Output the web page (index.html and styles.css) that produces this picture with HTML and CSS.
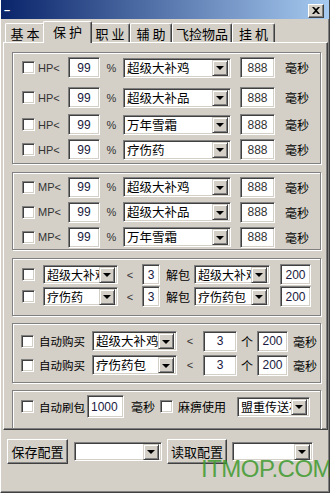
FILE: index.html
```html
<!DOCTYPE html>
<html lang="zh">
<head>
    <meta charset="UTF-8">
    <meta name="viewport" content="width=device-width, initial-scale=1.0">
    <title>保护设置</title>
    <link rel="stylesheet" href="styles.css">
</head>
<body>
    <div class="window">
        <div class="titlebar">
            <span class="title-dash">–</span>
            <span class="close-btn">
                <svg width="8" height="7" viewBox="0 0 8 7"><path d="M0 0h2l2 2 2-2h2L5 3.5 8 7H6L4 5 2 7H0l3-3.5z" fill="#000"/></svg>
            </span>
        </div>

        <div class="tabs">
            <div class="tab t-base">基本</div>
            <div class="tab active">保护</div>
            <div class="tab t-job">职业</div>
            <div class="tab t-aux">辅助</div>
            <div class="tab t-pick">飞捡物品</div>
            <div class="tab t-hang">挂 机</div>
        </div>

        <div class="panel">
            <!-- HP -->
            <div class="group g-hp">
                <div class="row">
                    <span class="check"></span>
                    <span class="lbl-stat">HP&lt;</span>
                    <span class="edit e-pct">99</span>
                    <span class="pct">%</span>
                    <div class="combo c-item"><span class="combo-text">超级大补鸡</span><span class="drop"></span></div>
                    <span class="edit e-ms">888</span>
                    <span class="unit u-ms">毫秒</span>
                </div>
                <div class="row">
                    <span class="check"></span>
                    <span class="lbl-stat">HP&lt;</span>
                    <span class="edit e-pct">99</span>
                    <span class="pct">%</span>
                    <div class="combo c-item"><span class="combo-text">超级大补品</span><span class="drop"></span></div>
                    <span class="edit e-ms">888</span>
                    <span class="unit u-ms">毫秒</span>
                </div>
                <div class="row">
                    <span class="check"></span>
                    <span class="lbl-stat">HP&lt;</span>
                    <span class="edit e-pct">99</span>
                    <span class="pct">%</span>
                    <div class="combo c-item"><span class="combo-text">万年雪霜</span><span class="drop"></span></div>
                    <span class="edit e-ms">888</span>
                    <span class="unit u-ms">毫秒</span>
                </div>
                <div class="row">
                    <span class="check"></span>
                    <span class="lbl-stat">HP&lt;</span>
                    <span class="edit e-pct">99</span>
                    <span class="pct">%</span>
                    <div class="combo c-item"><span class="combo-text">疗伤药</span><span class="drop"></span></div>
                    <span class="edit e-ms">888</span>
                    <span class="unit u-ms">毫秒</span>
                </div>
            </div>

            <!-- MP -->
            <div class="group g-mp">
                <div class="row">
                    <span class="check"></span>
                    <span class="lbl-stat">MP&lt;</span>
                    <span class="edit e-pct">99</span>
                    <span class="pct">%</span>
                    <div class="combo c-item"><span class="combo-text">超级大补鸡</span><span class="drop"></span></div>
                    <span class="edit e-ms">888</span>
                    <span class="unit u-ms">毫秒</span>
                </div>
                <div class="row">
                    <span class="check"></span>
                    <span class="lbl-stat">MP&lt;</span>
                    <span class="edit e-pct">99</span>
                    <span class="pct">%</span>
                    <div class="combo c-item"><span class="combo-text">超级大补品</span><span class="drop"></span></div>
                    <span class="edit e-ms">888</span>
                    <span class="unit u-ms">毫秒</span>
                </div>
                <div class="row">
                    <span class="check"></span>
                    <span class="lbl-stat">MP&lt;</span>
                    <span class="edit e-pct">99</span>
                    <span class="pct">%</span>
                    <div class="combo c-item"><span class="combo-text">万年雪霜</span><span class="drop"></span></div>
                    <span class="edit e-ms">888</span>
                    <span class="unit u-ms">毫秒</span>
                </div>
            </div>

            <!-- unpack -->
            <div class="group g-unpack">
                <div class="row">
                    <span class="check"></span>
                    <div class="combo c-pack"><span class="combo-text">超级大补鸡</span><span class="drop"></span></div>
                    <span class="lt">&lt;</span>
                    <span class="edit e-num">3</span>
                    <span class="unit u-unpack">解包</span>
                    <div class="combo c-bag"><span class="combo-text">超级大补鸡包</span><span class="drop"></span></div>
                    <span class="edit e-200">200</span>
                </div>
                <div class="row">
                    <span class="check"></span>
                    <div class="combo c-pack"><span class="combo-text">疗伤药</span><span class="drop"></span></div>
                    <span class="lt">&lt;</span>
                    <span class="edit e-num">3</span>
                    <span class="unit u-unpack">解包</span>
                    <div class="combo c-bag"><span class="combo-text">疗伤药包</span><span class="drop"></span></div>
                    <span class="edit e-200">200</span>
                </div>
            </div>

            <!-- auto buy -->
            <div class="group g-buy">
                <div class="row">
                    <span class="check"></span>
                    <span class="unit u-auto">自动购买</span>
                    <div class="combo c-buy"><span class="combo-text">超级大补鸡包</span><span class="drop"></span></div>
                    <span class="lt lt-buy">&lt;</span>
                    <span class="edit e-cnt">3</span>
                    <span class="ge">个</span>
                    <span class="edit e-buyms">200</span>
                    <span class="unit u-buyms">毫秒</span>
                </div>
                <div class="row">
                    <span class="check"></span>
                    <span class="unit u-auto">自动购买</span>
                    <div class="combo c-buy"><span class="combo-text">疗伤药包</span><span class="drop"></span></div>
                    <span class="lt lt-buy">&lt;</span>
                    <span class="edit e-cnt">3</span>
                    <span class="ge">个</span>
                    <span class="edit e-buyms">200</span>
                    <span class="unit u-buyms">毫秒</span>
                </div>
            </div>

            <!-- auto refresh -->
            <div class="group g-refresh">
                <div class="row">
                    <span class="check"></span>
                    <span class="unit u-auto u-refresh">自动刷包</span>
                    <span class="edit e-1000">1000</span>
                    <span class="unit u-refms">毫秒</span>
                    <span class="check c-numb"></span>
                    <span class="unit u-numb">麻痹使用</span>
                    <div class="combo c-scroll"><span class="combo-text">盟重传送石</span><span class="drop"></span></div>
                </div>
            </div>
        </div>

        <div class="footer">
            <span class="btn b-save">保存配置</span>
            <div class="combo c-cfg"><span class="combo-text"></span><span class="drop"></span></div>
            <span class="btn b-load">读取配置</span>
            <div class="combo c-cfg2"><span class="combo-text"></span><span class="drop"></span></div>
        </div>

        <div class="watermark">ITMOP.COM</div>
    </div>
</body>
</html>
```

FILE: styles.css
```css
body {
    margin: 0;
    background-color: #d4d0c8;
    font-family: "Noto Sans CJK SC", sans-serif;
    font-size: 12px;
    color: #000;
}
.window {
    position: relative;
    width: 330px;
    height: 493px;
    box-sizing: border-box;
    border-left: 1px solid #fff;
    border-right: 1px solid #404040;
    border-bottom: 1px solid #404040;
    box-shadow: inset -1px -1px 0 #808080;
    overflow: hidden;
}
.titlebar {
    height: 19px;
    display: flex;
    align-items: center;
    justify-content: space-between;
    padding: 0 5px 0 3px;
    background: linear-gradient(to right, #0a246a, #a6caf0);
}
.title-dash {
    color: #fff;
    font-family: "Liberation Sans", sans-serif;
    font-size: 11px;
    font-weight: bold;
}
.close-btn {
    width: 14px;
    height: 12px;
    margin-top: 2px;
    display: flex;
    align-items: center;
    justify-content: center;
    background: #d4d0c8;
    border: 1px solid;
    border-color: #fff #404040 #404040 #fff;
    box-shadow: inset -1px -1px 0 #808080;
}

/* tabs */
.tabs {
    display: flex;
    align-items: flex-end;
    height: 23px;
    padding-left: 4px;
}
.tab {
    height: 19px;
    box-sizing: border-box;
    display: flex;
    align-items: center;
    justify-content: center;
    font-size: 13px;
    letter-spacing: 3px;
    padding-left: 3px;
    border: 1px solid;
    border-bottom: none;
    border-color: #fff #404040 #404040 #fff;
    box-shadow: inset -1px 0 0 #808080;
    border-radius: 2px 2px 0 0;
}
.t-base { width: 40px; }
.t-job { width: 40px; }
.t-aux { width: 42px; }
.t-pick { width: 60px; letter-spacing: 0; padding-left: 0; }
.t-hang { width: 43px; letter-spacing: 0; padding-left: 0; }
.tab.active {
    width: 49px;
    height: 22px;
    margin: 0 -2px -1px;
    position: relative;
    z-index: 1;
    background: #d4d0c8;
    padding-bottom: 2px;
}

/* panel */
.panel {
    margin: 0 1px 0 2px;
    height: 388px;
    box-sizing: border-box;
    border: 1px solid;
    border-color: #fff #404040 #404040 #fff;
    box-shadow: inset -1px -1px 0 #808080;
    padding: 9px 6px 0 8px;
    display: flex;
    flex-direction: column;
    gap: 8px;
    overflow: hidden;
}
.group {
    border: 1px solid #808080;
    box-shadow: inset 1px 1px 0 #fff, 1px 1px 0 #fff;
    padding-left: 9px;
    display: flex;
    flex-direction: column;
}
.g-hp { height: 115px; box-sizing: border-box; padding-top: 4px; }
.g-hp .row:nth-child(2) { margin-top: 9px; }
.g-hp .row:nth-child(3) { margin-top: 6px; }
.g-hp .row:nth-child(4) { margin-top: 4px; }
.g-mp { height: 81px; box-sizing: border-box; padding-top: 4px; gap: 4px; }
.g-unpack { height: 59px; box-sizing: border-box; padding-top: 5px; gap: 1px; }
.g-buy { height: 62px; box-sizing: border-box; padding-top: 7px; gap: 3px; margin-top: -1px; }
.g-buy .row, .g-refresh .row { margin-left: -1px; }
.g-refresh { height: 40px; box-sizing: border-box; padding-top: 5px; margin-top: -1px; }

.row {
    display: flex;
    align-items: center;
    height: 21px;
}

/* controls */
.check {
    width: 13px;
    height: 13px;
    box-sizing: border-box;
    background: #fff;
    border: 1px solid;
    border-color: #808080 #fff #fff #808080;
    box-shadow: inset 1px 1px 0 #404040, inset -1px -1px 0 #d4d0c8;
    flex: none;
}
.edit {
    height: 21px;
    box-sizing: border-box;
    background: #fff;
    border: 1px solid;
    border-color: #808080 #fff #fff #808080;
    box-shadow: inset 1px 1px 0 #404040, inset -1px -1px 0 #d4d0c8;
    display: flex;
    align-items: center;
    justify-content: center;
    font-family: "Liberation Sans", sans-serif;
    font-size: 12px;
    color: #1a1a40;
    flex: none;
}
.combo {
    height: 20px;
    box-sizing: border-box;
    background: #fff;
    border: 1px solid;
    border-color: #808080 #fff #fff #808080;
    box-shadow: inset 1px 1px 0 #404040, inset -1px -1px 0 #d4d0c8;
    display: flex;
    align-items: center;
    padding: 2px;
    flex: none;
}
.combo-text {
    flex: 1;
    font-size: 12.5px;
    line-height: 16px;
    white-space: nowrap;
    overflow: hidden;
    padding-left: 1px;
}
.drop {
    width: 16px;
    height: 16px;
    box-sizing: border-box;
    flex: none;
    background: #d4d0c8;
    border: 1px solid;
    border-color: #d4d0c8 #404040 #404040 #d4d0c8;
    box-shadow: inset 1px 1px 0 #fff, inset -1px -1px 0 #808080;
    display: flex;
    align-items: center;
    justify-content: center;
}
.drop::after {
    content: "";
    border-left: 4px solid transparent;
    border-right: 4px solid transparent;
    border-top: 4px solid #000;
    margin-top: 1px;
}
.btn {
    height: 25px;
    box-sizing: border-box;
    display: flex;
    align-items: center;
    justify-content: center;
    font-size: 13px;
    border: 1px solid;
    border-color: #fff #404040 #404040 #fff;
    box-shadow: inset -1px -1px 0 #808080;
    flex: none;
}

/* row pieces */
.lbl-stat {
    width: 30px;
    margin-left: 3px;
    font-family: "Liberation Sans", sans-serif;
    font-size: 11px;
    color: #333;
}
.e-pct { width: 32px; }
.pct {
    width: 23px;
    text-align: center;
    font-family: "Liberation Sans", sans-serif;
    font-size: 11px;
    color: #333;
}
.c-item { width: 108px; }
.e-ms { width: 35px; margin-left: 9px; color: #333; }
.unit { white-space: nowrap; }
.u-ms { margin-left: 10px; }

.c-pack { width: 75px; margin-left: 8px; height: 19px; }
.lt {
    width: 24px;
    text-align: center;
    font-family: "Liberation Sans", sans-serif;
    font-size: 11px;
    color: #333;
}
.e-num { width: 18px; }
.u-unpack { margin-left: 6px; }
.c-bag { width: 76px; margin-left: 4px; height: 19px; }
.c-pack .combo-text, .c-bag .combo-text, .c-scroll .combo-text { font-size: 12px; }
.e-200 { width: 31px; margin-left: 10px; }

.u-auto { width: 46px; margin-left: 5px; font-size: 11.5px; }
.c-buy { width: 85px; margin-left: 7px; }
.lt-buy { width: 26px; }
.e-cnt { width: 34px; }
.ge { width: 20px; text-align: center; }
.e-buyms { width: 31px; }
.u-buyms { margin-left: 5px; }

.u-refresh { width: 48px; }
.e-1000 { width: 37px; height: 23px; justify-content: flex-start; padding-left: 3px; }
.u-refms { margin-left: 7px; }
.c-numb { margin-left: 5px; }
.u-numb { margin-left: 5px; }
.c-scroll { width: 73px; margin-left: 11px; }

/* bottom buttons */
.footer {
    display: flex;
    align-items: center;
    padding: 9px 0 0 6px;
}
.b-save { width: 61px; }
.c-cfg { width: 88px; margin-left: 6px; height: 19px; }
.b-load { width: 60px; margin-left: 5px; }
.c-cfg2 { width: 81px; margin-left: 5px; height: 19px; }

.watermark {
    position: absolute;
    left: 200px;
    top: 455px;
    font-family: "Liberation Sans", sans-serif;
    font-size: 24px;
    color: #3e9a2e;
    opacity: 0.85;
    letter-spacing: -0.5px;
}
```
